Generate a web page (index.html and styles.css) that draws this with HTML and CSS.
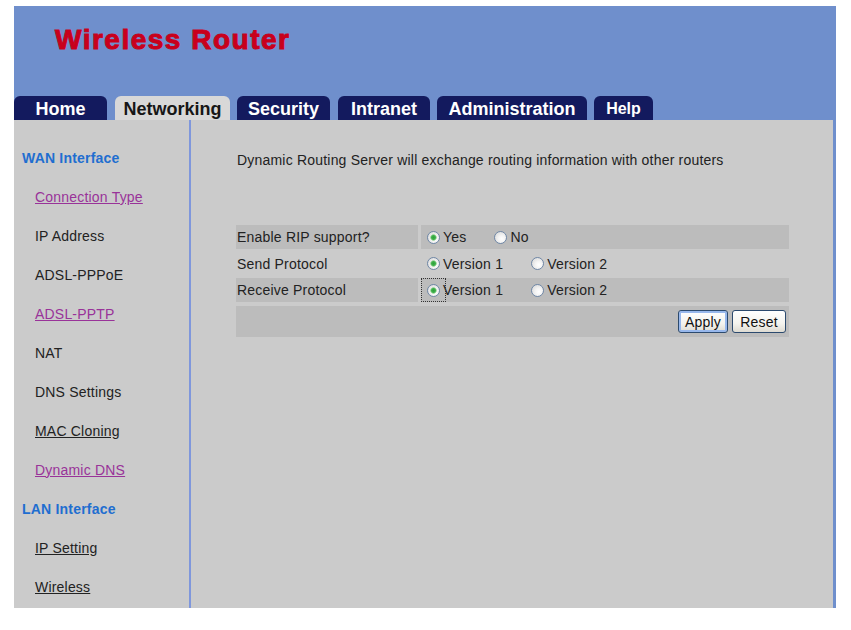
FILE: index.html
```html
<!DOCTYPE html>
<html>
<head>
<meta charset="utf-8">
<title>Wireless Router</title>
<link rel="stylesheet" href="styles.css">
</head>
<body>
<div class="page">
  <header class="header">
    <h1 class="title">Wireless Router</h1>
    <nav class="tabs">
      <a class="tab tab-home">Home</a>
      <a class="tab tab-net active">Networking</a>
      <a class="tab tab-sec">Security</a>
      <a class="tab tab-intra">Intranet</a>
      <a class="tab tab-admin">Administration</a>
      <a class="tab tab-help">Help</a>
    </nav>
  </header>
  <div class="main">
    <aside class="sidebar">
      <div class="side-row side-head">WAN Interface</div>
      <div class="side-row"><a class="side-link visited">Connection Type</a></div>
      <div class="side-row"><span class="side-item">IP Address</span></div>
      <div class="side-row"><span class="side-item">ADSL-PPPoE</span></div>
      <div class="side-row"><a class="side-link visited">ADSL-PPTP</a></div>
      <div class="side-row"><span class="side-item">NAT</span></div>
      <div class="side-row"><span class="side-item">DNS Settings</span></div>
      <div class="side-row"><a class="side-link">MAC Cloning</a></div>
      <div class="side-row"><a class="side-link visited">Dynamic DNS</a></div>
      <div class="side-row side-head">LAN Interface</div>
      <div class="side-row"><a class="side-link">IP Setting</a></div>
      <div class="side-row"><a class="side-link">Wireless</a></div>
    </aside>
    <section class="content">
      <p class="desc">Dynamic Routing Server will exchange routing information with other routers</p>
      <div class="form">
        <div class="row dark">
          <div class="cell label">Enable RIP support?</div>
          <div class="cell value">
            <label class="opt"><input type="radio" class="radio" name="rip" checked>Yes</label>
            <label class="opt"><input type="radio" class="radio" name="rip">No</label>
          </div>
        </div>
        <div class="row">
          <div class="cell label">Send Protocol</div>
          <div class="cell value">
            <label class="opt"><input type="radio" class="radio" name="send" checked>Version 1</label>
            <label class="opt"><input type="radio" class="radio" name="send">Version 2</label>
          </div>
        </div>
        <div class="row dark">
          <div class="cell label">Receive Protocol</div>
          <div class="cell value">
            <label class="opt"><span class="focus-wrap"><input type="radio" class="radio" name="recv" checked></span>Version 1</label>
            <label class="opt"><input type="radio" class="radio" name="recv">Version 2</label>
          </div>
        </div>
        <div class="btn-row">
          <button class="btn btn-apply">Apply</button>
          <button class="btn btn-reset">Reset</button>
        </div>
      </div>
    </section>
  </div>
</div>
</body>
</html>
```
FILE: styles.css
```css
html, body {
  margin: 0;
  padding: 0;
  background: #ffffff;
}
body {
  font-family: "Liberation Sans", Arial, sans-serif;
  font-size: 14px;
  letter-spacing: 0.2px;
  color: #222;
}
.page {
  margin: 6px 0 0 14px;
  width: 822px;
}
.header {
  background: #6f8fcc;
  height: 114px;
  display: flex;
  flex-direction: column;
}
.title {
  margin: 0;
  padding: 18px 0 0 41px;
  height: 72px;
  box-sizing: border-box;
  font-family: "Liberation Sans", Arial, sans-serif;
  font-size: 28px;
  line-height: 32px;
  font-weight: bold;
  letter-spacing: 1.5px;
  color: #c8001c;
  -webkit-text-stroke: 1px #c8001c;
}
.tabs {
  margin-top: auto;
  display: flex;
  align-items: flex-end;
  height: 24px;
}
.tab {
  display: flex;
  align-items: center;
  justify-content: center;
  height: 24px;
  box-sizing: border-box;
  padding-top: 2px;
  border-radius: 6px 6px 0 0;
  background: #131a5e;
  color: #ffffff;
  font-weight: bold;
  font-size: 18px;
  letter-spacing: 0;
  margin-right: 7px;
}
.tab.active {
  background: #d8d8d8;
  color: #161616;
}
.tab-home { width: 93px; margin-right: 8px; }
.tab-net { width: 115px; }
.tab-sec { width: 93px; margin-right: 8px; }
.tab-intra { width: 92px; }
.tab-admin { width: 150px; }
.tab-help { width: 59px; font-size: 16px; }
.main {
  display: flex;
  height: 488px;
  background: #cbcbcb;
  border-right: 3px solid #6f8fcc;
  box-sizing: border-box;
}
.sidebar {
  width: 175px;
  flex: none;
  border-right: 2px solid #7f97dc;
  padding-top: 18px;
  box-sizing: content-box;
}
.side-row {
  height: 39px;
  display: flex;
  align-items: center;
  padding-left: 21px;
}
.side-head {
  padding-left: 8px;
  color: #1f6ed0;
  font-weight: bold;
}
.side-item {
  color: #222;
}
.side-link {
  color: #222;
  text-decoration: underline;
}
.side-link.visited {
  color: #993399;
}
.content {
  flex: 1;
  padding: 32px 0 0 45px;
}
.desc {
  margin: 0;
  line-height: 16px;
  padding-left: 1px;
}
.form {
  margin-top: 57px;
  width: 553px;
  display: flex;
  flex-direction: column;
  gap: 2px;
}
.row {
  display: grid;
  grid-template-columns: 182px 1fr;
  column-gap: 3px;
  height: 24px;
}
.row:nth-child(2) {
  height: 25px;
}
.cell {
  display: flex;
  align-items: center;
}
.row.dark .cell {
  background: #bcbcbc;
}
.label {
  padding-left: 1px;
}
.value {
  padding-left: 6px;
}
.opt {
  display: flex;
  align-items: center;
  margin-right: 28px;
}
.radio {
  -webkit-appearance: none;
  appearance: none;
  display: block;
  margin: 0 3px 0 0;
  width: 13px;
  height: 13px;
  border-radius: 50%;
  border: 1px solid #6f87a6;
  box-sizing: border-box;
  background: radial-gradient(circle at 62% 62%, #ffffff 0, #f4f4f4 35%, #d2d2d2 100%);
}
.radio:checked {
  background:
    radial-gradient(circle, #2f9f3c 0, #3fb24b 2px, rgba(120, 200, 120, 0.6) 3px, transparent 3.6px),
    radial-gradient(circle at 62% 62%, #ffffff 0, #f4f4f4 35%, #d2d2d2 100%);
}
.focus-wrap {
  position: relative;
  display: block;
}
.focus-wrap::after {
  content: "";
  position: absolute;
  left: -6px;
  top: -6px;
  width: 25px;
  height: 24px;
  border: 1px dotted #333;
  box-sizing: border-box;
  pointer-events: none;
}
.btn-row {
  margin-top: 2px;
  height: 31px;
  background: #bcbcbc;
  display: flex;
  align-items: center;
  justify-content: flex-end;
  gap: 4px;
  padding-right: 3px;
}
.btn {
  font-family: "Liberation Sans", Arial, sans-serif;
  font-size: 14px;
  letter-spacing: 0.2px;
  color: #111;
  height: 23px;
  padding: 0;
  border: 1px solid #2c4a6e;
  border-radius: 3px;
  background: linear-gradient(#ffffff 0%, #f4f3ee 60%, #dedbd2 100%);
}
.btn-apply {
  width: 50px;
  box-shadow: inset 0 0 0 2px #98b8ec;
}
.btn-reset {
  width: 54px;
}
```
